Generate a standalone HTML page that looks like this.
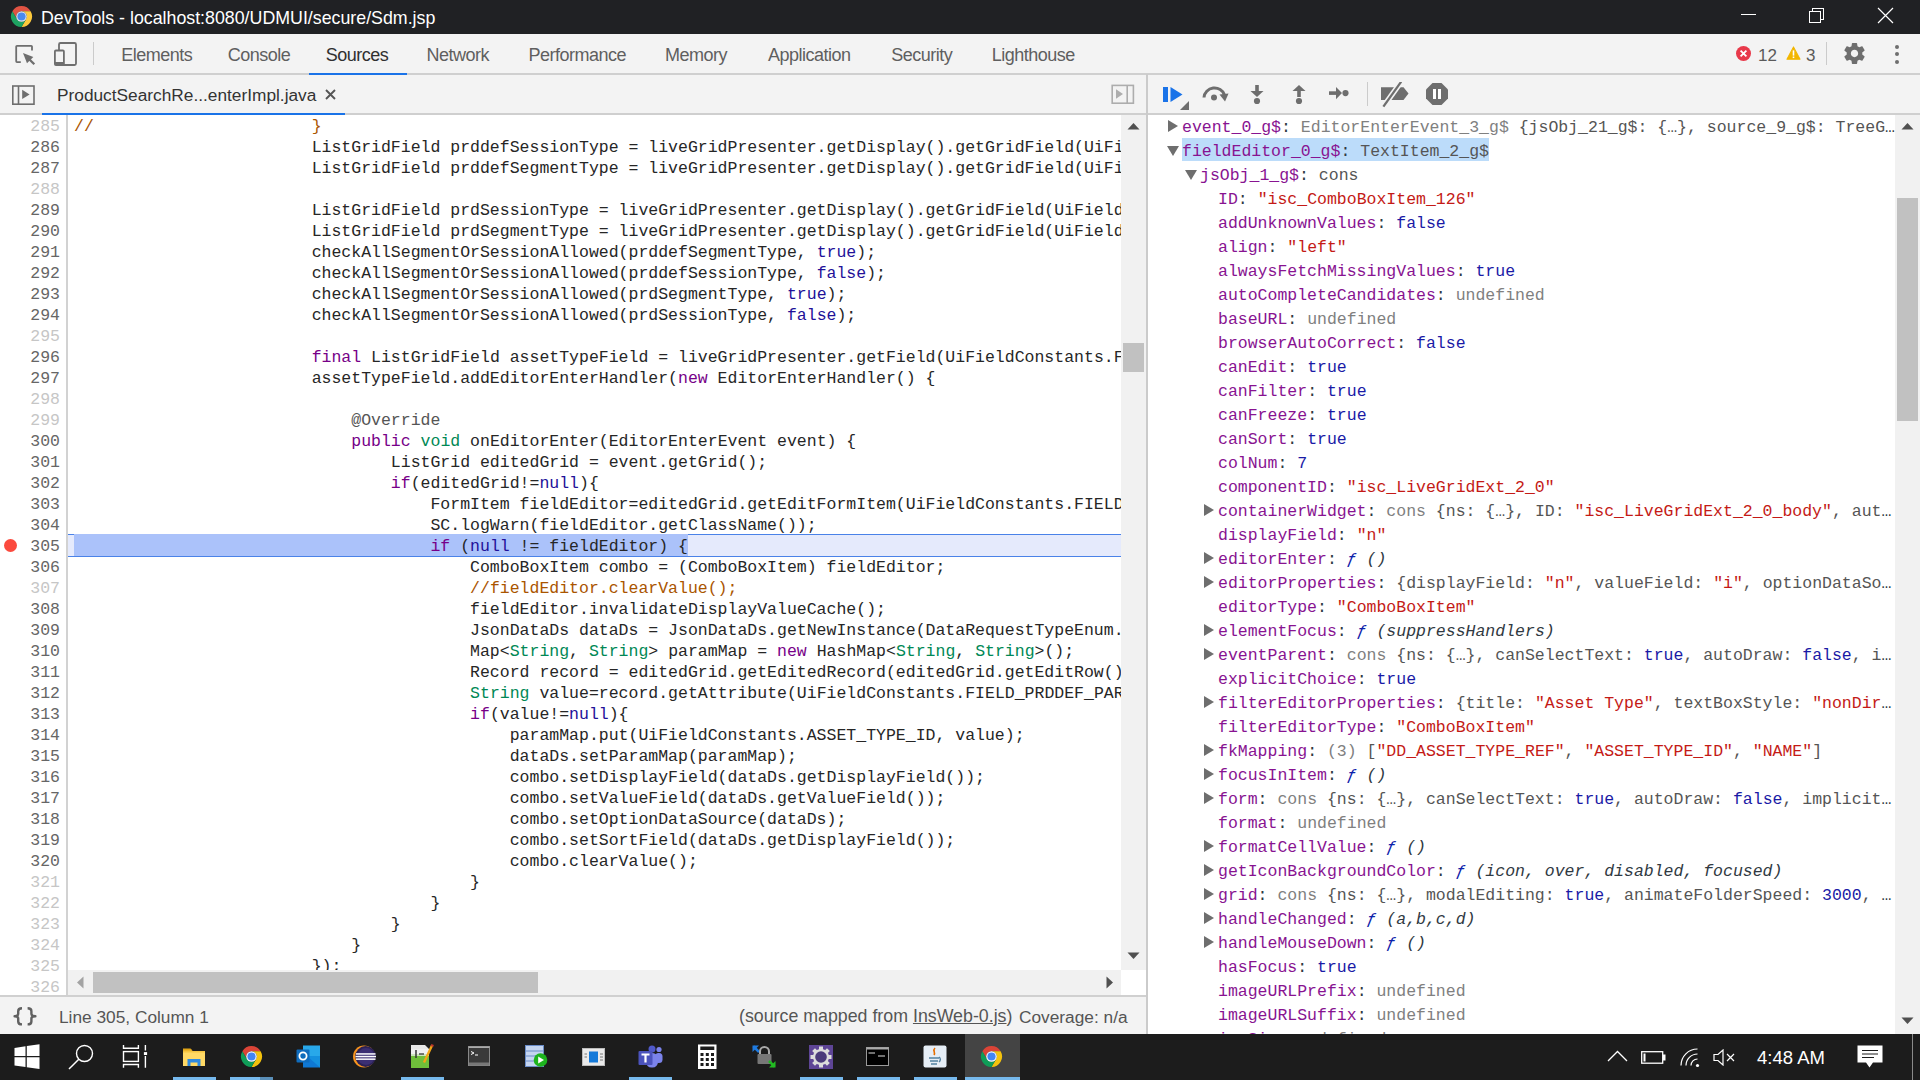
<!DOCTYPE html>
<html><head><meta charset="utf-8"><title>DevTools</title>
<style>
*{box-sizing:border-box;margin:0;padding:0}
html,body{width:1920px;height:1080px;overflow:hidden;background:#fff;font-family:"Liberation Sans",sans-serif;position:relative}
.abs{position:absolute}
#title{position:absolute;left:0;top:0;width:1920px;height:34px;background:#202124;color:#fff}
#title .t{position:absolute;left:41px;top:7.5px;font-size:17.8px;white-space:nowrap;color:#fff}
#tb1{position:absolute;left:0;top:34px;width:1920px;height:41px;background:#f3f3f3;border-bottom:2px solid #cfcfcf}
.tab{position:absolute;top:11px;width:160px;text-align:center;font-size:18px;letter-spacing:-0.5px;color:#5f5f5f;white-space:nowrap}
#tb2{position:absolute;left:0;top:75px;width:1920px;height:40px;background:#f3f3f3;border-bottom:2px solid #cfcfcf}
.ln{position:absolute;left:0;width:60px;text-align:right;font-family:"Liberation Mono",monospace;font-size:16.5px;line-height:21px;height:21px;color:#666}
.ln.light{color:#c6c6c6}
.cl{position:absolute;left:74px;width:1047px;overflow:hidden;white-space:pre;font-family:"Liberation Mono",monospace;font-size:16.5px;line-height:21px;height:21px;color:#262626}
.kw{color:#770088}.ty{color:#008855}.at{color:#221199}.cm{color:#aa5500}.mt{color:#555}
.sr{position:absolute;left:0;width:1896px;height:24px}
.stx{position:absolute;top:0;right:0;white-space:pre;overflow:hidden;text-overflow:ellipsis;font-family:"Liberation Mono",monospace;font-size:16.5px;line-height:24px;height:24px;color:#303942}
.pn{color:#881391}.st{color:#c41a16}.bo{color:#1a1aa6}.un{color:#808080}.gy{color:#808080}.dk{color:#555}.cl2{color:#303942}
.fn i{font-style:italic;color:#303942}.fn .ff{color:#0d22aa}
.sel{background:#bcdcfa}
.arr{position:absolute;width:0;height:0}
.ar{top:6px;border-left:10px solid #6e6e6e;border-top:6px solid transparent;border-bottom:6px solid transparent}
.ad{top:8px;border-top:10px solid #6e6e6e;border-left:6px solid transparent;border-right:6px solid transparent}
#taskbar{position:absolute;left:0;top:1034px;width:1920px;height:46px;background:#1c1c1c}
.tbtxt{font-size:17px;color:#5a5a5a;white-space:nowrap}
.tab2{left:57px;top:9.5px;font-size:17.3px;color:#333;white-space:nowrap}
.sttxt{top:9.5px;font-size:17.3px;color:#555;white-space:nowrap}

</style></head>
<body>
<div id="title">
<svg class="abs" style="left:9.5px;top:4.5px" width="23" height="23" viewBox="0 0 24 24">
<path d="M2.47 6.5 A11 11 0 0 1 21.53 6.5 L12 6.5 A5.5 5.5 0 0 0 7.24 14.75 Z" fill="#e05343"/>
<path d="M21.53 6.5 A11 11 0 0 1 12 23 L16.76 14.75 A5.5 5.5 0 0 0 12 6.5 Z" fill="#fdc93c"/>
<path d="M12 23 A11 11 0 0 1 2.47 6.5 L7.24 14.75 A5.5 5.5 0 0 0 16.76 14.75 Z" fill="#1ea362"/>
<circle cx="12" cy="12" r="5.5" fill="#e8eaed"/><circle cx="12" cy="12" r="4.3" fill="#4a89ee"/></svg>
<div class="t">DevTools - localhost:8080/UDMUI/secure/Sdm.jsp</div>
<div class="abs" style="left:1741px;top:14px;width:15px;height:1px;background:#fff"></div>
<div class="abs" style="left:1812px;top:8px;width:12px;height:12px;border:1px solid #fff"></div>
<div class="abs" style="left:1809px;top:11px;width:12px;height:12px;border:1px solid #fff;background:#202124"></div>
<svg class="abs" style="left:1877px;top:7px" width="17" height="17" viewBox="0 0 17 17"><path d="M1 1L16 16M16 1L1 16" stroke="#fff" stroke-width="1.2"/></svg>
</div>
<div id="tb1"><div class="tab" style="left:76.75px">Elements</div><div class="tab" style="left:179.10000000000002px">Console</div><div class="tab" style="left:277.1px;color:#303030">Sources</div><div class="tab" style="left:377.75px">Network</div><div class="tab" style="left:497.20000000000005px">Performance</div><div class="tab" style="left:616px">Memory</div><div class="tab" style="left:729.25px">Application</div><div class="tab" style="left:841.7px">Security</div><div class="tab" style="left:953.25px">Lighthouse</div>
<svg class="abs" style="left:14px;top:10px" width="22" height="22" viewBox="0 0 22 22">
<path d="M6.8 18.1 H3 Q2.2 18.1 2.2 17.3 V2.6 Q2.2 1.8 3 1.8 H17.2 Q18 1.8 18 2.6 V6.5" fill="none" stroke="#6e6e6e" stroke-width="1.8"/>
<path d="M9 9 L19.3 13 L13 19.3 Z" fill="#6e6e6e"/><path d="M14.5 14.5 L20.3 20.3" stroke="#6e6e6e" stroke-width="2.3"/>
</svg>
<svg class="abs" style="left:53px;top:7px" width="26" height="26" viewBox="0 0 26 26">
<rect x="6" y="2" width="17" height="22" rx="1.5" fill="none" stroke="#6e6e6e" stroke-width="1.8"/>
<rect x="1.9" y="9.5" width="9" height="14.5" rx="1" fill="#f3f3f3" stroke="#6e6e6e" stroke-width="1.8"/>
<rect x="1.9" y="21" width="9" height="3" fill="#6e6e6e"/>
</svg>
<div class="abs" style="left:93px;top:8px;width:1px;height:23px;background:#cbcbcb"></div>
<div class="abs" style="left:309px;top:39px;width:98px;height:2px;background:#1a73e8"></div>
<svg class="abs" style="left:1735px;top:11px" width="17" height="17" viewBox="0 0 17 17"><circle cx="8.5" cy="8.5" r="7.5" fill="#e8394a"/><path d="M5.6 5.6L11.4 11.4M11.4 5.6L5.6 11.4" stroke="#fff" stroke-width="1.8"/></svg>
<div class="abs tbtxt" style="left:1758px;top:12px">12</div>
<svg class="abs" style="left:1786px;top:12px" width="15" height="14" viewBox="0 0 17 16"><path d="M8.5 1 L16 15 L1 15 Z" fill="#f2b600" stroke="#f2b600" stroke-width="1.2" stroke-linejoin="round"/><rect x="7.6" y="5" width="1.8" height="6" fill="#fff"/><rect x="7.6" y="12" width="1.8" height="1.8" fill="#fff"/></svg>
<div class="abs tbtxt" style="left:1806px;top:12px">3</div>
<div class="abs" style="left:1826px;top:8px;width:1px;height:23px;background:#cbcbcb"></div>
<svg class="abs" style="left:1841.7px;top:7.4px" width="25" height="25" viewBox="0 0 24 24"><path fill="#6e6e6e" d="M19.43 12.98c.04-.32.07-.64.07-.98s-.03-.66-.07-.98l2.11-1.65c.19-.15.24-.42.12-.64l-2-3.46c-.12-.22-.39-.3-.61-.22l-2.49 1c-.52-.4-1.08-.73-1.69-.98l-.38-2.65C14.46 2.18 14.25 2 14 2h-4c-.25 0-.46.18-.49.42l-.38 2.65c-.61.25-1.17.59-1.69.98l-2.49-1c-.23-.09-.49 0-.61.22l-2 3.46c-.13.22-.07.49.12.64l2.11 1.65c-.04.32-.07.65-.07.98s.03.66.07.98l-2.11 1.65c-.19.15-.24.42-.12.64l2 3.46c.12.22.39.3.61.22l2.49-1c.52.4 1.08.73 1.69.98l.38 2.65c.03.24.24.42.49.42h4c.25 0 .46-.18.49-.42l.38-2.65c.61-.25 1.17-.59 1.69-.98l2.49 1c.23.09.49 0 .61-.22l2-3.46c.12-.22.07-.49-.12-.64l-2.11-1.65zM12 15.5c-1.93 0-3.5-1.57-3.5-3.5s1.57-3.5 3.5-3.5 3.5 1.57 3.5 3.5-1.57 3.5-3.5 3.5z"/></svg>
<div class="abs" style="left:1895px;top:11px;width:4px;height:4px;border-radius:2px;background:#6e6e6e"></div>
<div class="abs" style="left:1895px;top:18px;width:4px;height:4px;border-radius:2px;background:#6e6e6e"></div>
<div class="abs" style="left:1895px;top:26px;width:4px;height:4px;border-radius:2px;background:#6e6e6e"></div>
</div>
<div id="tb2">
<svg class="abs" style="left:11px;top:10px" width="26" height="22" viewBox="0 0 26 22">
<rect x="1.8" y="1" width="21.2" height="18.2" fill="none" stroke="#6e6e6e" stroke-width="1.6"/>
<line x1="7.5" y1="1" x2="7.5" y2="19.5" stroke="#6e6e6e" stroke-width="1.6"/>
<path d="M11.2 4.8 L18.6 9.4 L11.2 14 Z" fill="#6e6e6e"/>
</svg>
<div class="abs tab2">ProductSearchRe...enterImpl.java</div>
<svg class="abs" style="left:324px;top:13px" width="13" height="13" viewBox="0 0 13 13"><path d="M2 2L11 11M11 2L2 11" stroke="#555" stroke-width="1.9"/></svg>
<div class="abs" style="left:42px;top:38px;width:303px;height:2px;background:#1a73e8"></div>
<svg class="abs" style="left:1110px;top:9px" width="26" height="22" viewBox="0 0 26 22">
<rect x="2.2" y="1.4" width="21.2" height="17.8" fill="none" stroke="#adadad" stroke-width="1.6"/>
<line x1="17.2" y1="1.4" x2="17.2" y2="19.2" stroke="#adadad" stroke-width="1.6"/>
<path d="M6 5.2 L13 10 L6 14.8 Z" fill="#adadad"/>
</svg>
<!-- debugger toolbar -->
<div class="abs" style="left:1163px;top:11.5px;width:4.5px;height:15px;background:#1a73e8"></div>
<svg class="abs" style="left:1170px;top:11.5px" width="13" height="15" viewBox="0 0 13 15"><path d="M0.5 0 L12.5 7.5 L0.5 15 Z" fill="#1a73e8"/></svg>
<svg class="abs" style="left:1180px;top:26px" width="9" height="9" viewBox="0 0 9 9"><path d="M9 0 L9 9 L0 9 Z" fill="#6e6e6e"/></svg>
<svg class="abs" style="left:1201px;top:11px" width="30" height="20" viewBox="0 0 30 20">
<path d="M3 11.5 A10.5 10 0 0 1 23.5 9" fill="none" stroke="#6e6e6e" stroke-width="3"/>
<path d="M18.5 8.5 L27.5 7.5 L24 15.5 Z" fill="#6e6e6e"/>
<circle cx="13" cy="11.5" r="3" fill="#6e6e6e"/></svg>
<svg class="abs" style="left:1248px;top:8px" width="18" height="24" viewBox="0 0 18 24">
<rect x="7.2" y="2" width="3.6" height="7" fill="#6e6e6e"/><path d="M2.5 8 H15.5 L9 14 Z" fill="#6e6e6e"/>
<circle cx="9" cy="18" r="3.1" fill="#6e6e6e"/></svg>
<svg class="abs" style="left:1290px;top:8px" width="18" height="24" viewBox="0 0 18 24">
<rect x="7.2" y="7.5" width="3.6" height="6.5" fill="#6e6e6e"/><path d="M2.5 8 H15.5 L9 2 Z" fill="#6e6e6e"/>
<circle cx="9" cy="18" r="3.1" fill="#6e6e6e"/></svg>
<svg class="abs" style="left:1327px;top:11px" width="24" height="16" viewBox="0 0 24 16">
<rect x="2" y="5.3" width="8" height="3.6" fill="#6e6e6e"/><path d="M9 1 L15 7.1 L9 13.2 Z" fill="#6e6e6e"/>
<circle cx="18.5" cy="7.1" r="3.1" fill="#6e6e6e"/></svg>
<div class="abs" style="left:1367px;top:7px;width:1px;height:24px;background:#cbcbcb"></div>
<svg class="abs" style="left:1380px;top:7px" width="30" height="27" viewBox="0 0 30 27">
<path d="M1 5.3 H15.2 L6.2 17.9 H1 Z" fill="#6e6e6e"/><path d="M19.2 5.3 H23.5 L28.5 11.6 L23.5 17.9 H10.2 Z" fill="#6e6e6e"/>
<path d="M21.2 -0.3 L3.4 24.7" stroke="#f3f3f3" stroke-width="5.5"/><path d="M21.2 -0.3 L3.4 24.7" stroke="#6e6e6e" stroke-width="2.3"/></svg>
<svg class="abs" style="left:1425px;top:7px" width="24" height="24" viewBox="0 0 24 24">
<path d="M7.5 1 H16.5 L23 7.5 V16.5 L16.5 23 H7.5 L1 16.5 V7.5 Z" fill="#6e6e6e"/>
<rect x="8" y="7" width="3" height="10" fill="#fff"/><rect x="13" y="7" width="3" height="10" fill="#fff"/></svg>
</div>
<!-- code area -->
<div class="abs" style="left:66px;top:115px;width:2px;height:880px;background:#d2d2d2"></div>
<!-- execution line -->
<div class="abs" style="left:68px;top:534px;width:1053px;height:23px;background:#e5eafc;border-top:1px solid #4a82e8;border-bottom:1px solid #4a82e8"></div>
<div class="abs" style="left:74px;top:534px;width:614px;height:22px;background:#abc2fa"></div>
<div class="abs" style="left:4px;top:539px;width:13px;height:13px;border-radius:50%;background:#fb4a3e"></div>
<div class="ln light" style="top:116px">285</div>
<div class="ln" style="top:137px">286</div>
<div class="ln" style="top:158px">287</div>
<div class="ln light" style="top:179px">288</div>
<div class="ln" style="top:200px">289</div>
<div class="ln" style="top:221px">290</div>
<div class="ln" style="top:242px">291</div>
<div class="ln" style="top:263px">292</div>
<div class="ln" style="top:284px">293</div>
<div class="ln" style="top:305px">294</div>
<div class="ln light" style="top:326px">295</div>
<div class="ln" style="top:347px">296</div>
<div class="ln" style="top:368px">297</div>
<div class="ln light" style="top:389px">298</div>
<div class="ln light" style="top:410px">299</div>
<div class="ln" style="top:431px">300</div>
<div class="ln" style="top:452px">301</div>
<div class="ln" style="top:473px">302</div>
<div class="ln" style="top:494px">303</div>
<div class="ln" style="top:515px">304</div>
<div class="ln" style="top:536px">305</div>
<div class="ln" style="top:557px">306</div>
<div class="ln light" style="top:578px">307</div>
<div class="ln" style="top:599px">308</div>
<div class="ln" style="top:620px">309</div>
<div class="ln" style="top:641px">310</div>
<div class="ln" style="top:662px">311</div>
<div class="ln" style="top:683px">312</div>
<div class="ln" style="top:704px">313</div>
<div class="ln" style="top:725px">314</div>
<div class="ln" style="top:746px">315</div>
<div class="ln" style="top:767px">316</div>
<div class="ln" style="top:788px">317</div>
<div class="ln" style="top:809px">318</div>
<div class="ln" style="top:830px">319</div>
<div class="ln" style="top:851px">320</div>
<div class="ln light" style="top:872px">321</div>
<div class="ln light" style="top:893px">322</div>
<div class="ln light" style="top:914px">323</div>
<div class="ln light" style="top:935px">324</div>
<div class="ln light" style="top:956px">325</div>
<div class="ln light" style="top:977px">326</div>
<div class="cl" style="top:116px"><span class="cm">//                      }</span></div>
<div class="cl" style="top:137px">                        ListGridField prddefSessionType = liveGridPresenter.getDisplay().getGridField(UiFieldConstants</div>
<div class="cl" style="top:158px">                        ListGridField prddefSegmentType = liveGridPresenter.getDisplay().getGridField(UiFieldConstants</div>
<div class="cl" style="top:179px"></div>
<div class="cl" style="top:200px">                        ListGridField prdSessionType = liveGridPresenter.getDisplay().getGridField(UiFieldConstants</div>
<div class="cl" style="top:221px">                        ListGridField prdSegmentType = liveGridPresenter.getDisplay().getGridField(UiFieldConstants</div>
<div class="cl" style="top:242px">                        checkAllSegmentOrSessionAllowed(prddefSegmentType, <span class="at">true</span>);</div>
<div class="cl" style="top:263px">                        checkAllSegmentOrSessionAllowed(prddefSessionType, <span class="at">false</span>);</div>
<div class="cl" style="top:284px">                        checkAllSegmentOrSessionAllowed(prdSegmentType, <span class="at">true</span>);</div>
<div class="cl" style="top:305px">                        checkAllSegmentOrSessionAllowed(prdSessionType, <span class="at">false</span>);</div>
<div class="cl" style="top:326px"></div>
<div class="cl" style="top:347px">                        <span class="kw">final</span> ListGridField assetTypeField = liveGridPresenter.getField(UiFieldConstants.FIELD_ASSET</div>
<div class="cl" style="top:368px">                        assetTypeField.addEditorEnterHandler(<span class="kw">new</span> EditorEnterHandler() {</div>
<div class="cl" style="top:389px"></div>
<div class="cl" style="top:410px">                            <span class="mt">@Override</span></div>
<div class="cl" style="top:431px">                            <span class="kw">public</span> <span class="ty">void</span> onEditorEnter(EditorEnterEvent event) {</div>
<div class="cl" style="top:452px">                                ListGrid editedGrid = event.getGrid();</div>
<div class="cl" style="top:473px">                                <span class="kw">if</span>(editedGrid!=<span class="at">null</span>){</div>
<div class="cl" style="top:494px">                                    FormItem fieldEditor=editedGrid.getEditFormItem(UiFieldConstants.FIELD_ASSET</div>
<div class="cl" style="top:515px">                                    SC.logWarn(fieldEditor.getClassName());</div>
<div class="cl" style="top:536px">                                    <span class="kw">if</span> (<span class="at">null</span> != fieldEditor) {</div>
<div class="cl" style="top:557px">                                        ComboBoxItem combo = (ComboBoxItem) fieldEditor;</div>
<div class="cl" style="top:578px">                                        <span class="cm">//fieldEditor.clearValue();</span></div>
<div class="cl" style="top:599px">                                        fieldEditor.invalidateDisplayValueCache();</div>
<div class="cl" style="top:620px">                                        JsonDataDs dataDs = JsonDataDs.getNewInstance(DataRequestTypeEnum.ASSET</div>
<div class="cl" style="top:641px">                                        Map&lt;<span class="ty">String</span>, <span class="ty">String</span>&gt; paramMap = <span class="kw">new</span> HashMap&lt;<span class="ty">String</span>, <span class="ty">String</span>&gt;();</div>
<div class="cl" style="top:662px">                                        Record record = editedGrid.getEditedRecord(editedGrid.getEditRow());</div>
<div class="cl" style="top:683px">                                        <span class="ty">String</span> value=record.getAttribute(UiFieldConstants.FIELD_PRDDEF_PARAM</div>
<div class="cl" style="top:704px">                                        <span class="kw">if</span>(value!=<span class="at">null</span>){</div>
<div class="cl" style="top:725px">                                            paramMap.put(UiFieldConstants.ASSET_TYPE_ID, value);</div>
<div class="cl" style="top:746px">                                            dataDs.setParamMap(paramMap);</div>
<div class="cl" style="top:767px">                                            combo.setDisplayField(dataDs.getDisplayField());</div>
<div class="cl" style="top:788px">                                            combo.setValueField(dataDs.getValueField());</div>
<div class="cl" style="top:809px">                                            combo.setOptionDataSource(dataDs);</div>
<div class="cl" style="top:830px">                                            combo.setSortField(dataDs.getDisplayField());</div>
<div class="cl" style="top:851px">                                            combo.clearValue();</div>
<div class="cl" style="top:872px">                                        }</div>
<div class="cl" style="top:893px">                                    }</div>
<div class="cl" style="top:914px">                                }</div>
<div class="cl" style="top:935px">                            }</div>
<div class="cl" style="top:956px">                        });</div>
<div class="cl" style="top:977px"></div>
<!-- code v-scrollbar -->
<div class="abs" style="left:1121px;top:115px;width:25px;height:855px;background:#f1f1f1"></div>
<svg class="abs" style="left:1127px;top:122px" width="13" height="8" viewBox="0 0 13 8"><path d="M0.5 7.5 L6.5 1 L12.5 7.5 Z" fill="#505050"/></svg>
<svg class="abs" style="left:1127px;top:952px" width="13" height="8" viewBox="0 0 13 8"><path d="M0.5 0.5 L6.5 7 L12.5 0.5 Z" fill="#505050"/></svg>
<div class="abs" style="left:1123px;top:343px;width:21px;height:29px;background:#c1c1c1"></div>
<!-- code h-scrollbar -->
<div class="abs" style="left:68px;top:970px;width:1053px;height:25px;background:#f1f1f1"></div>
<svg class="abs" style="left:76px;top:976px" width="8" height="13" viewBox="0 0 8 13"><path d="M7.5 0.5 L1 6.5 L7.5 12.5 Z" fill="#a3a3a3"/></svg>
<svg class="abs" style="left:1105.5px;top:976px" width="8" height="13" viewBox="0 0 8 13"><path d="M0.5 0.5 L7 6.5 L0.5 12.5 Z" fill="#505050"/></svg>
<div class="abs" style="left:93px;top:972px;width:445px;height:21px;background:#c1c1c1"></div>
<!-- divider -->
<div class="abs" style="left:1146px;top:74px;width:2px;height:961px;background:#cbcbcb"></div>
<div class="abs" style="left:1182px;top:138px;width:307px;height:23px;background:#bcdcfa"></div>
<div class="sr" style="top:114px"><div class="arr ar" style="left:1168px"></div><div class="stx" style="left:1182px;top:2px"><span class="pn">event_0_g$</span><span class="cl2">: </span><span class="gy">EditorEnterEvent_3_g$ </span><span class="dk">{jsObj_21_g$: {…}, source_9_g$: TreeGrid_5_g$, sourceObj: {…}}</span></div></div>
<div class="sr" style="top:138px"><div class="arr ad" style="left:1167px"></div><div class="stx" style="left:1182px;top:2px"><span class="pn">fieldEditor_0_g$</span><span class="cl2">: </span><span class="dk">TextItem_2_g$</span></div></div>
<div class="sr" style="top:162px"><div class="arr ad" style="left:1185px"></div><div class="stx" style="left:1200px;top:2px"><span class="pn">jsObj_1_g$</span><span class="cl2">: </span><span class="dk">cons</span></div></div>
<div class="sr" style="top:186px"><div class="stx" style="left:1218px;top:2px"><span class="pn">ID</span><span class="cl2">: </span><span class="st">"isc_ComboBoxItem_126"</span></div></div>
<div class="sr" style="top:210px"><div class="stx" style="left:1218px;top:2px"><span class="pn">addUnknownValues</span><span class="cl2">: </span><span class="bo">false</span></div></div>
<div class="sr" style="top:234px"><div class="stx" style="left:1218px;top:2px"><span class="pn">align</span><span class="cl2">: </span><span class="st">"left"</span></div></div>
<div class="sr" style="top:258px"><div class="stx" style="left:1218px;top:2px"><span class="pn">alwaysFetchMissingValues</span><span class="cl2">: </span><span class="bo">true</span></div></div>
<div class="sr" style="top:282px"><div class="stx" style="left:1218px;top:2px"><span class="pn">autoCompleteCandidates</span><span class="cl2">: </span><span class="un">undefined</span></div></div>
<div class="sr" style="top:306px"><div class="stx" style="left:1218px;top:2px"><span class="pn">baseURL</span><span class="cl2">: </span><span class="un">undefined</span></div></div>
<div class="sr" style="top:330px"><div class="stx" style="left:1218px;top:2px"><span class="pn">browserAutoCorrect</span><span class="cl2">: </span><span class="bo">false</span></div></div>
<div class="sr" style="top:354px"><div class="stx" style="left:1218px;top:2px"><span class="pn">canEdit</span><span class="cl2">: </span><span class="bo">true</span></div></div>
<div class="sr" style="top:378px"><div class="stx" style="left:1218px;top:2px"><span class="pn">canFilter</span><span class="cl2">: </span><span class="bo">true</span></div></div>
<div class="sr" style="top:402px"><div class="stx" style="left:1218px;top:2px"><span class="pn">canFreeze</span><span class="cl2">: </span><span class="bo">true</span></div></div>
<div class="sr" style="top:426px"><div class="stx" style="left:1218px;top:2px"><span class="pn">canSort</span><span class="cl2">: </span><span class="bo">true</span></div></div>
<div class="sr" style="top:450px"><div class="stx" style="left:1218px;top:2px"><span class="pn">colNum</span><span class="cl2">: </span><span class="bo">7</span></div></div>
<div class="sr" style="top:474px"><div class="stx" style="left:1218px;top:2px"><span class="pn">componentID</span><span class="cl2">: </span><span class="st">"isc_LiveGridExt_2_0"</span></div></div>
<div class="sr" style="top:498px"><div class="arr ar" style="left:1204px"></div><div class="stx" style="left:1218px;top:2px"><span class="pn">containerWidget</span><span class="cl2">: </span><span class="gy">cons </span><span class="dk">{ns: {…}, ID: </span><span class="st">"isc_LiveGridExt_2_0_body"</span><span class="dk">, autoDraw: false, parentElement: {…}}</span></div></div>
<div class="sr" style="top:522px"><div class="stx" style="left:1218px;top:2px"><span class="pn">displayField</span><span class="cl2">: </span><span class="st">"n"</span></div></div>
<div class="sr" style="top:546px"><div class="arr ar" style="left:1204px"></div><div class="stx" style="left:1218px;top:2px"><span class="pn">editorEnter</span><span class="cl2">: </span><span class="fn"><i class="ff">ƒ</i> <i>()</i></span></div></div>
<div class="sr" style="top:570px"><div class="arr ar" style="left:1204px"></div><div class="stx" style="left:1218px;top:2px"><span class="pn">editorProperties</span><span class="cl2">: </span><span class="dk">{displayField: </span><span class="st">"n"</span><span class="dk">, valueField: </span><span class="st">"i"</span><span class="dk">, optionDataSource: {…}}</span></div></div>
<div class="sr" style="top:594px"><div class="stx" style="left:1218px;top:2px"><span class="pn">editorType</span><span class="cl2">: </span><span class="st">"ComboBoxItem"</span></div></div>
<div class="sr" style="top:618px"><div class="arr ar" style="left:1204px"></div><div class="stx" style="left:1218px;top:2px"><span class="pn">elementFocus</span><span class="cl2">: </span><span class="fn"><i class="ff">ƒ</i> <i>(suppressHandlers)</i></span></div></div>
<div class="sr" style="top:642px"><div class="arr ar" style="left:1204px"></div><div class="stx" style="left:1218px;top:2px"><span class="pn">eventParent</span><span class="cl2">: </span><span class="gy">cons </span><span class="dk">{ns: {…}, canSelectText: </span><span class="bo">true</span><span class="dk">, autoDraw: </span><span class="bo">false</span><span class="dk">, implicit: {…}}</span></div></div>
<div class="sr" style="top:666px"><div class="stx" style="left:1218px;top:2px"><span class="pn">explicitChoice</span><span class="cl2">: </span><span class="bo">true</span></div></div>
<div class="sr" style="top:690px"><div class="arr ar" style="left:1204px"></div><div class="stx" style="left:1218px;top:2px"><span class="pn">filterEditorProperties</span><span class="cl2">: </span><span class="dk">{title: </span><span class="st">"Asset Type"</span><span class="dk">, textBoxStyle: </span><span class="st">"nonDirtyCellEditor"</span><span class="dk">}</span></div></div>
<div class="sr" style="top:714px"><div class="stx" style="left:1218px;top:2px"><span class="pn">filterEditorType</span><span class="cl2">: </span><span class="st">"ComboBoxItem"</span></div></div>
<div class="sr" style="top:738px"><div class="arr ar" style="left:1204px"></div><div class="stx" style="left:1218px;top:2px"><span class="pn">fkMapping</span><span class="cl2">: </span><span class="gy">(3) </span><span class="dk">[</span><span class="st">"DD_ASSET_TYPE_REF"</span><span class="dk">, </span><span class="st">"ASSET_TYPE_ID"</span><span class="dk">, </span><span class="st">"NAME"</span><span class="dk">]</span></div></div>
<div class="sr" style="top:762px"><div class="arr ar" style="left:1204px"></div><div class="stx" style="left:1218px;top:2px"><span class="pn">focusInItem</span><span class="cl2">: </span><span class="fn"><i class="ff">ƒ</i> <i>()</i></span></div></div>
<div class="sr" style="top:786px"><div class="arr ar" style="left:1204px"></div><div class="stx" style="left:1218px;top:2px"><span class="pn">form</span><span class="cl2">: </span><span class="gy">cons </span><span class="dk">{ns: {…}, canSelectText: </span><span class="bo">true</span><span class="dk">, autoDraw: </span><span class="bo">false</span><span class="dk">, implicitSave: false}</span></div></div>
<div class="sr" style="top:810px"><div class="stx" style="left:1218px;top:2px"><span class="pn">format</span><span class="cl2">: </span><span class="un">undefined</span></div></div>
<div class="sr" style="top:834px"><div class="arr ar" style="left:1204px"></div><div class="stx" style="left:1218px;top:2px"><span class="pn">formatCellValue</span><span class="cl2">: </span><span class="fn"><i class="ff">ƒ</i> <i>()</i></span></div></div>
<div class="sr" style="top:858px"><div class="arr ar" style="left:1204px"></div><div class="stx" style="left:1218px;top:2px"><span class="pn">getIconBackgroundColor</span><span class="cl2">: </span><span class="fn"><i class="ff">ƒ</i> <i>(icon, over, disabled, focused)</i></span></div></div>
<div class="sr" style="top:882px"><div class="arr ar" style="left:1204px"></div><div class="stx" style="left:1218px;top:2px"><span class="pn">grid</span><span class="cl2">: </span><span class="gy">cons </span><span class="dk">{ns: {…}, modalEditing: </span><span class="bo">true</span><span class="dk">, animateFolderSpeed: </span><span class="bo">3000</span><span class="dk">, animate: true}</span></div></div>
<div class="sr" style="top:906px"><div class="arr ar" style="left:1204px"></div><div class="stx" style="left:1218px;top:2px"><span class="pn">handleChanged</span><span class="cl2">: </span><span class="fn"><i class="ff">ƒ</i> <i>(a,b,c,d)</i></span></div></div>
<div class="sr" style="top:930px"><div class="arr ar" style="left:1204px"></div><div class="stx" style="left:1218px;top:2px"><span class="pn">handleMouseDown</span><span class="cl2">: </span><span class="fn"><i class="ff">ƒ</i> <i>()</i></span></div></div>
<div class="sr" style="top:954px"><div class="stx" style="left:1218px;top:2px"><span class="pn">hasFocus</span><span class="cl2">: </span><span class="bo">true</span></div></div>
<div class="sr" style="top:978px"><div class="stx" style="left:1218px;top:2px"><span class="pn">imageURLPrefix</span><span class="cl2">: </span><span class="un">undefined</span></div></div>
<div class="sr" style="top:1002px"><div class="stx" style="left:1218px;top:2px"><span class="pn">imageURLSuffix</span><span class="cl2">: </span><span class="un">undefined</span></div></div>
<div class="sr" style="top:1026px"><div class="stx" style="left:1218px;top:2px"><span class="pn">iosSin</span><span class="cl2">: </span><span class="un">undefined</span></div></div>
<!-- scope v-scrollbar -->
<div class="abs" style="left:1895px;top:115px;width:25px;height:919px;background:#f1f1f1"></div>
<svg class="abs" style="left:1901px;top:122px" width="13" height="8" viewBox="0 0 13 8"><path d="M0.5 7.5 L6.5 1 L12.5 7.5 Z" fill="#505050"/></svg>
<svg class="abs" style="left:1901px;top:1017px" width="13" height="8" viewBox="0 0 13 8"><path d="M0.5 0.5 L6.5 7 L12.5 0.5 Z" fill="#505050"/></svg>
<div class="abs" style="left:1897px;top:198px;width:21px;height:223px;background:#c1c1c1"></div>
<!-- status bar -->
<div id="status" class="abs" style="left:0;top:995px;width:1146px;height:39px;background:#f3f3f3;border-top:2px solid #d0d0d0">
<svg class="abs" style="left:13px;top:9.5px" width="25" height="19" viewBox="0 0 25 19"><g fill="none" stroke="#616161" stroke-width="2.4" stroke-linejoin="round"><path d="M9 1.3 Q5.2 1.3 5.2 4.3 V6.8 Q5.2 9.2 1.6 9.2 Q5.2 9.2 5.2 11.6 V14.4 Q5.2 17.4 9 17.4"/><path d="M14.6 1.3 Q18.4 1.3 18.4 4.3 V6.8 Q18.4 9.2 22.4 9.2 Q18.4 9.2 18.4 11.6 V14.4 Q18.4 17.4 14.6 17.4"/></g></svg>
<div class="abs sttxt" style="left:59px">Line 305, Column 1</div>
<div class="abs sttxt" style="left:739px;font-size:17.8px;top:9px">(source mapped from <u>InsWeb-0.js</u>)</div>
<div class="abs sttxt" style="left:1019px">Coverage: n/a</div>
</div>
<div id="taskbar">
<!-- windows logo -->
<svg class="abs" style="left:14px;top:10px" width="26" height="26" viewBox="0 0 26 26">
<path d="M0.5 4 L11.5 2.3 V12 H0.5 Z M12.8 2.1 L25.5 0.2 V12 H12.8 Z M0.5 13.3 H11.5 V23 L0.5 21.4 Z M12.8 13.3 H25.5 V25 L12.8 23.2 Z" fill="#fff"/></svg>
<!-- search -->
<svg class="abs" style="left:67px;top:10px" width="28" height="26" viewBox="0 0 28 26">
<circle cx="17.5" cy="9.5" r="8" fill="none" stroke="#fff" stroke-width="1.4"/><path d="M11.8 15.2 L2 25" stroke="#fff" stroke-width="1.5"/></svg>
<!-- task view -->
<svg class="abs" style="left:122px;top:10px" width="27" height="26" viewBox="0 0 27 26">
<g fill="none" stroke="#fff" stroke-width="1.4"><path d="M1.5 1 V4.3 H16.4 V1"/><rect x="1.5" y="7.6" width="14.9" height="9.8"/><path d="M1.5 23.7 V20.5 H16.4 V23.7"/>
<path d="M23.4 1 V6.6 M23.4 12 V23.7"/></g><rect x="21.9" y="8.1" width="3.2" height="2.9" fill="#fff"/></svg>
<!-- file explorer -->
<svg class="abs" style="left:182px;top:13px" width="24" height="20" viewBox="0 0 24 20">
<path d="M1 2 H8.5 L10.5 4 H23 V19 H1 Z" fill="#f5c542"/><path d="M1 1.5 H8.5 L10.5 3.5 H1 Z" fill="#e2a516"/>
<path d="M1 5.5 H23 V19 H1 Z" fill="#ffd965"/><path d="M5.5 12 H18.5 V19 H15.5 V15.5 H8.5 V19 H5.5 Z" fill="#2f8ae0"/></svg>
<div class="abs" style="left:173px;top:43px;width:43px;height:3px;background:#76b9ed"></div>
<!-- chrome -->
<svg class="abs" style="left:240px;top:11px" width="23" height="23" viewBox="0 0 24 24">
<path d="M2.47 6.5 A11 11 0 0 1 21.53 6.5 L12 6.5 A5.5 5.5 0 0 0 7.24 14.75 Z" fill="#db4437"/>
<path d="M21.53 6.5 A11 11 0 0 1 12 23 L16.76 14.75 A5.5 5.5 0 0 0 12 6.5 Z" fill="#f4c20d"/>
<path d="M12 23 A11 11 0 0 1 2.47 6.5 L7.24 14.75 A5.5 5.5 0 0 0 16.76 14.75 Z" fill="#0f9d58"/>
<circle cx="12" cy="12" r="5.5" fill="#ffffff"/><circle cx="12" cy="12" r="4.3" fill="#4285f4"/></svg>
<div class="abs" style="left:230px;top:43px;width:30px;height:3px;background:#76b9ed"></div>
<div class="abs" style="left:260px;top:43px;width:13px;height:3px;background:#5a8fb8"></div>
<!-- outlook -->
<svg class="abs" style="left:296px;top:11px" width="25" height="23" viewBox="0 0 25 23">
<rect x="7" y="0.5" width="17" height="13" fill="#28a8ea"/><path d="M7 11 L24 11 V22.5 H7 Z" fill="#0f78d4"/><path d="M11 11 L24 22.5 V11 Z" fill="#1490df"/>
<rect x="0.5" y="4.5" width="13" height="13" rx="1" fill="#0f6cbd"/><circle cx="7" cy="11" r="3.6" fill="none" stroke="#fff" stroke-width="1.8"/></svg>
<!-- eclipse -->
<svg class="abs" style="left:352px;top:11px" width="25" height="23" viewBox="0 0 25 23">
<circle cx="12" cy="11.5" r="11" fill="#f7941e"/><circle cx="13.6" cy="11.5" r="10.4" fill="#2c2255"/><circle cx="14" cy="11.5" r="8.5" fill="#3b2f73"/>
<rect x="4" y="8.2" width="19.5" height="1.5" fill="#fff"/><rect x="3.5" y="10.8" width="20.5" height="1.5" fill="#fff"/><rect x="4" y="13.4" width="19.5" height="1.5" fill="#fff"/></svg>
<!-- notepad++ -->
<svg class="abs" style="left:410px;top:10px" width="24" height="26" viewBox="0 0 24 26">
<path d="M1 1 H15 L19 5 V24 H1 Z" fill="#e8e8e8"/><path d="M1 10 H19 V24 H1 Z" fill="#6fbf3a"/><path d="M1 5 H19 V12 H1 Z" fill="#f2f2f2" opacity="0.7"/>
<path d="M6 6 V14" stroke="#333" stroke-width="1.5"/><path d="M9 10 H14" stroke="#333" stroke-width="1.3"/>
<path d="M22 1.5 L14 18.5" stroke="#f2a516" stroke-width="2.4"/><path d="M21 1 L23.5 2" stroke="#c0392b" stroke-width="2"/></svg>
<div class="abs" style="left:401px;top:43px;width:43px;height:3px;background:#76b9ed"></div>
<!-- terminal -->
<svg class="abs" style="left:468px;top:12px" width="22" height="20" viewBox="0 0 22 20">
<rect x="0.5" y="0.5" width="21" height="19" fill="#3a3a3a" stroke="#888" stroke-width="1"/><rect x="0.5" y="0.5" width="21" height="1.5" fill="#aaa"/><rect x="1" y="16.5" width="20" height="3" fill="#777"/>
<path d="M3 5.5 L6 7 L3 8.5" fill="none" stroke="#fff" stroke-width="1"/><path d="M7 9 H10" stroke="#fff" stroke-width="1"/></svg>
<!-- app with play -->
<svg class="abs" style="left:525px;top:11px" width="23" height="23" viewBox="0 0 23 23">
<rect x="0.5" y="0.5" width="18" height="21" fill="#c5d5f0" stroke="#6a8cc8"/><path d="M0.5 6 H18.5 M0.5 11 H18.5 M0.5 16 H18.5" stroke="#6a8cc8"/>
<circle cx="15.5" cy="15" r="6.8" fill="#1db31d"/><path d="M13.2 11.5 L19 15 L13.2 18.5 Z" fill="#fff"/></svg>
<!-- window app -->
<svg class="abs" style="left:582px;top:14px" width="23" height="18" viewBox="0 0 23 18">
<rect x="0.5" y="0.5" width="22" height="17" fill="#e9e9e9" stroke="#bbb"/><rect x="7" y="3.5" width="9" height="11" fill="#1479d9"/><path d="M2.5 6 H5 M2.5 9 H5 M18 6 H21 M18 9 H21 M18 12 H21" stroke="#777"/></svg>
<!-- teams -->
<svg class="abs" style="left:638px;top:11px" width="25" height="23" viewBox="0 0 25 23">
<circle cx="21" cy="4.5" r="2.6" fill="#7b83eb"/><rect x="17" y="8" width="7.5" height="10" rx="3.5" fill="#7b83eb"/>
<circle cx="14" cy="4" r="3.5" fill="#5059c9"/><rect x="8" y="8" width="12" height="14.5" rx="5.5" fill="#7b83eb"/>
<rect x="0.5" y="6" width="14" height="14" rx="1" fill="#4b53bc"/><path d="M3.5 9.5 H11.5 M7.5 9.5 V17.5" stroke="#fff" stroke-width="2.2"/></svg>
<div class="abs" style="left:629px;top:43px;width:43px;height:3px;background:#76b9ed"></div>
<!-- calculator -->
<svg class="abs" style="left:698px;top:10px" width="19" height="26" viewBox="0 0 19 26">
<rect x="0" y="0.5" width="18.5" height="24.5" fill="#fff"/><rect x="2.3" y="2.5" width="14" height="3.5" fill="#1c1c1c"/>
<g fill="#1c1c1c"><rect x="2.5" y="9" width="3" height="3"/><rect x="7.8" y="9" width="3" height="3"/><rect x="13" y="9" width="3" height="3"/>
<rect x="2.5" y="14" width="3" height="3"/><rect x="7.8" y="14" width="3" height="3"/><rect x="13" y="14" width="3" height="3"/>
<rect x="2.5" y="19" width="3" height="3"/><rect x="7.8" y="19" width="3" height="3"/><rect x="13" y="19" width="3" height="3"/></g></svg>
<!-- vpn lock -->
<svg class="abs" style="left:752px;top:11px" width="24" height="23" viewBox="0 0 24 23">
<path d="M0.5 0.5 H7 L0.5 7 Z" fill="#1e7ae0"/><path d="M1.5 1.5 L7 7" stroke="#1e7ae0" stroke-width="2.5"/>
<path d="M8 9 V6.5 A4.5 4.5 0 0 1 17 6.5 V9" fill="none" stroke="#aaa" stroke-width="2"/><rect x="5.5" y="9" width="14" height="10" rx="1" fill="#777"/>
<path d="M23.5 22.5 H17 L23.5 16 Z" fill="#22bb22"/><path d="M22.5 21.5 L17 16" stroke="#22bb22" stroke-width="2.5"/></svg>
<!-- purple gear -->
<svg class="abs" style="left:809px;top:11px" width="24" height="24" viewBox="0 0 24 24"><rect x="0" y="0" width="24" height="24" fill="#5e4596"/><g fill="#dcdcdc"><rect x="10" y="1.5" width="4" height="5" transform="rotate(0 12 12)"/><rect x="10" y="1.5" width="4" height="5" transform="rotate(45 12 12)"/><rect x="10" y="1.5" width="4" height="5" transform="rotate(90 12 12)"/><rect x="10" y="1.5" width="4" height="5" transform="rotate(135 12 12)"/><rect x="10" y="1.5" width="4" height="5" transform="rotate(180 12 12)"/><rect x="10" y="1.5" width="4" height="5" transform="rotate(225 12 12)"/><rect x="10" y="1.5" width="4" height="5" transform="rotate(270 12 12)"/><rect x="10" y="1.5" width="4" height="5" transform="rotate(315 12 12)"/></g><circle cx="12" cy="12" r="8" fill="#dcdcdc"/><circle cx="12" cy="12" r="5.8" fill="#4a3a7a"/></svg>
<div class="abs" style="left:800px;top:43px;width:43px;height:3px;background:#76b9ed"></div>
<!-- cmd -->
<svg class="abs" style="left:866px;top:13px" width="23" height="19" viewBox="0 0 23 19">
<rect x="0.5" y="0.5" width="22" height="18" fill="#000" stroke="#999"/><rect x="0.5" y="0.5" width="22" height="2" fill="#aaa"/><path d="M2.5 6 H9 M12 9 H19" stroke="#ddd" stroke-width="1.2"/></svg>
<div class="abs" style="left:857px;top:43px;width:43px;height:3px;background:#76b9ed"></div>
<!-- java -->
<svg class="abs" style="left:923px;top:11px" width="24" height="23" viewBox="0 0 24 23">
<rect x="0.5" y="0.5" width="23" height="22" rx="2" fill="#e6eef6"/><path d="M12 3 C9 6 13 7 11 10" fill="none" stroke="#e76f00" stroke-width="1.6"/>
<path d="M6 13 H16 M7 16 H15 M8 19 H14" stroke="#5382a1" stroke-width="1.4"/><path d="M16 12 A3 3 0 0 1 16 17" fill="none" stroke="#5382a1" stroke-width="1.4"/></svg>
<div class="abs" style="left:914px;top:43px;width:43px;height:3px;background:#76b9ed"></div>
<!-- active chrome -->
<div class="abs" style="left:965px;top:0;width:55px;height:46px;background:#444"></div>
<svg class="abs" style="left:980px;top:11px" width="23" height="23" viewBox="0 0 24 24">
<path d="M2.47 6.5 A11 11 0 0 1 21.53 6.5 L12 6.5 A5.5 5.5 0 0 0 7.24 14.75 Z" fill="#db4437"/>
<path d="M21.53 6.5 A11 11 0 0 1 12 23 L16.76 14.75 A5.5 5.5 0 0 0 12 6.5 Z" fill="#f4c20d"/>
<path d="M12 23 A11 11 0 0 1 2.47 6.5 L7.24 14.75 A5.5 5.5 0 0 0 16.76 14.75 Z" fill="#0f9d58"/>
<circle cx="12" cy="12" r="5.5" fill="#ffffff"/><circle cx="12" cy="12" r="4.3" fill="#4285f4"/></svg>
<div class="abs" style="left:965px;top:43px;width:55px;height:3px;background:#76b9ed"></div>
<!-- tray -->
<svg class="abs" style="left:1607px;top:16px" width="21" height="12" viewBox="0 0 21 12"><path d="M1 11 L10.5 1.5 L20 11" fill="none" stroke="#fff" stroke-width="1.3"/></svg>
<svg class="abs" style="left:1641px;top:17px" width="25" height="13" viewBox="0 0 25 13"><rect x="0.7" y="0.7" width="21" height="11.5" fill="none" stroke="#fff" stroke-width="1.3"/><rect x="22" y="3.5" width="2.5" height="6" fill="#fff"/><rect x="2.5" y="2.5" width="2" height="8" fill="#fff"/></svg>
<svg class="abs" style="left:1679px;top:13px" width="22" height="22" viewBox="0 0 22 22">
<g fill="none" stroke="#fff" stroke-width="1.2"><path d="M2 18.5 A16.5 16.5 0 0 1 18.5 2"/><path d="M7 18.5 A11.5 11.5 0 0 1 18.5 7"/><path d="M12 18.5 A6.5 6.5 0 0 1 18.5 12"/></g><circle cx="18.5" cy="18.5" r="1.6" fill="#fff"/></svg>
<svg class="abs" style="left:1713px;top:15px" width="23" height="17" viewBox="0 0 23 17"><path d="M1 5.5 H5 L10 1 V16 L5 11.5 H1 Z" fill="none" stroke="#fff" stroke-width="1.2"/><path d="M14 5 L21 12 M21 5 L14 12" stroke="#fff" stroke-width="1.2"/></svg>
<div class="abs" style="left:1757px;top:13px;font-size:18.5px;color:#fff;white-space:nowrap">4:48 AM</div>
<svg class="abs" style="left:1857px;top:11px" width="26" height="24" viewBox="0 0 26 24"><path d="M0.5 0.5 H25.5 V17.5 H16 L12.5 22.5 L9 17.5 H0.5 Z" fill="#fff"/><path d="M5 5.5 H21 M5 9 H21 M5 12.5 H17" stroke="#1c1c1c" stroke-width="1.2"/></svg>
<div class="abs" style="left:1912px;top:0;width:1px;height:46px;background:#8a8a8a"></div>
</div>

</body></html>
